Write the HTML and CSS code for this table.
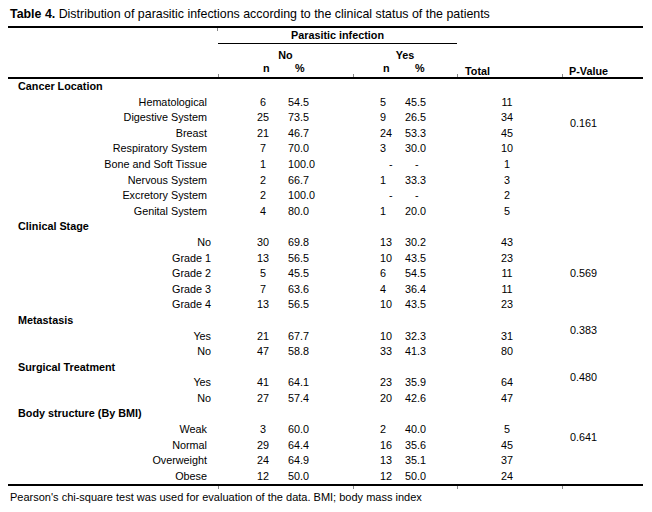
FILE: index.html
```html
<!DOCTYPE html>
<html>
<head>
<meta charset="utf-8">
<link rel="stylesheet" href="styles.css">
</head>
<body>
<div class="page">
  <div class="title"><b>Table 4.</b> Distribution of parasitic infections according to the clinical status of the patients</div>
  <div class="rule"></div>
  <div class="head">
    <div class="h-empty"></div>
    <div class="h-par">Parasitic infection</div>
    <div class="h-no">No</div>
    <div class="h-yes">Yes</div>
    <div class="h-nn tk">n</div>
    <div class="h-np">%</div>
    <div class="h-yn tk">n</div>
    <div class="h-yp">%</div>
    <div class="h-tot tk">Total</div>
    <div class="h-pv tk">P-Value</div>
  </div>
  <div class="rule"></div>
  <div class="body">
    <div class="pv pv1">0.161</div>
    <div class="pv pv2">0.569</div>
    <div class="pv pv3">0.383</div>
    <div class="pv pv4">0.480</div>
    <div class="pv pv5">0.641</div>

    <div class="grp">Cancer Location</div>
    <div class="lab">Hematological</div><div class="nn">6</div><div class="np">54.5</div><div class="yn">5</div><div class="yp">45.5</div><div class="tot">11</div>
    <div class="lab">Digestive System</div><div class="nn">25</div><div class="np">73.5</div><div class="yn">9</div><div class="yp">26.5</div><div class="tot">34</div>
    <div class="lab">Breast</div><div class="nn">21</div><div class="np">46.7</div><div class="yn">24</div><div class="yp">53.3</div><div class="tot">45</div>
    <div class="lab">Respiratory System</div><div class="nn">7</div><div class="np">70.0</div><div class="yn">3</div><div class="yp">30.0</div><div class="tot">10</div>
    <div class="lab">Bone and Soft Tissue</div><div class="nn">1</div><div class="np">100.0</div><div class="yn dash">-</div><div class="yp dash">-</div><div class="tot">1</div>
    <div class="lab">Nervous System</div><div class="nn">2</div><div class="np">66.7</div><div class="yn">1</div><div class="yp">33.3</div><div class="tot">3</div>
    <div class="lab">Excretory System</div><div class="nn">2</div><div class="np">100.0</div><div class="yn dash">-</div><div class="yp dash">-</div><div class="tot">2</div>
    <div class="lab">Genital System</div><div class="nn">4</div><div class="np">80.0</div><div class="yn">1</div><div class="yp">20.0</div><div class="tot">5</div>

    <div class="grp">Clinical Stage</div>
    <div class="lab lab-w">No</div><div class="nn">30</div><div class="np">69.8</div><div class="yn">13</div><div class="yp">30.2</div><div class="tot">43</div>
    <div class="lab lab-w">Grade 1</div><div class="nn">13</div><div class="np">56.5</div><div class="yn">10</div><div class="yp">43.5</div><div class="tot">23</div>
    <div class="lab lab-w">Grade 2</div><div class="nn">5</div><div class="np">45.5</div><div class="yn">6</div><div class="yp">54.5</div><div class="tot">11</div>
    <div class="lab lab-w">Grade 3</div><div class="nn">7</div><div class="np">63.6</div><div class="yn">4</div><div class="yp">36.4</div><div class="tot">11</div>
    <div class="lab lab-w">Grade 4</div><div class="nn">13</div><div class="np">56.5</div><div class="yn">10</div><div class="yp">43.5</div><div class="tot">23</div>

    <div class="grp">Metastasis</div>
    <div class="lab lab-w">Yes</div><div class="nn">21</div><div class="np">67.7</div><div class="yn">10</div><div class="yp">32.3</div><div class="tot">31</div>
    <div class="lab lab-w">No</div><div class="nn">47</div><div class="np">58.8</div><div class="yn">33</div><div class="yp">41.3</div><div class="tot">80</div>

    <div class="grp">Surgical Treatment</div>
    <div class="lab lab-w">Yes</div><div class="nn">41</div><div class="np">64.1</div><div class="yn">23</div><div class="yp">35.9</div><div class="tot">64</div>
    <div class="lab lab-w">No</div><div class="nn">27</div><div class="np">57.4</div><div class="yn">20</div><div class="yp">42.6</div><div class="tot">47</div>

    <div class="grp">Body structure (By BMI)</div>
    <div class="lab">Weak</div><div class="nn">3</div><div class="np">60.0</div><div class="yn">2</div><div class="yp">40.0</div><div class="tot">5</div>
    <div class="lab">Normal</div><div class="nn">29</div><div class="np">64.4</div><div class="yn">16</div><div class="yp">35.6</div><div class="tot">45</div>
    <div class="lab">Overweight</div><div class="nn">24</div><div class="np">64.9</div><div class="yn">13</div><div class="yp">35.1</div><div class="tot">37</div>
    <div class="lab">Obese</div><div class="nn">12</div><div class="np">50.0</div><div class="yn">12</div><div class="yp">50.0</div><div class="tot">24</div>
  </div>
  <div class="rule"></div>
  <div class="ticks"><span class="t2"></span><span class="t4"></span><span class="t6"></span><span class="t7"></span></div>
  <div class="foot">Pearson's chi-square test was used for evaluation of the data. BMI; body mass index</div>
</div>
</body>
</html>
```
FILE: styles.css
```css
html, body {
  margin: 0;
  padding: 0;
  background: #fff;
}
body {
  font-family: "Liberation Sans", Arial, sans-serif;
  font-size: 10.8px;
  color: #000;
}
.page {
  width: 635px;
  margin-left: 8px;
}
.title {
  font-size: 12.4px;
  line-height: 16px;
  padding: 6px 0 0 2px;
  margin-bottom: 4px;
  white-space: nowrap;
}
.rule {
  height: 2px;
  background: #000;
}
.head, .body, .ticks {
  display: grid;
  grid-template-columns: 210px 70px 65px 52px 52px 105px 81px;
}
.head {
  grid-template-rows: 16px 17px 16px;
  font-weight: bold;
  line-height: 15px;
}
.h-empty {
  grid-column: 1;
  grid-row: 1;
  background: linear-gradient(#888, #888) right top / 1px 3px no-repeat;
}
.h-par {
  grid-column: 2 / 6;
  grid-row: 1;
  text-align: center;
  border-bottom: 1px solid #000;
}
.h-no, .h-yes {
  grid-row: 2;
  text-align: center;
  padding-top: 4px;
}
.h-no { grid-column: 2 / 4; }
.h-yes { grid-column: 4 / 6; }
.h-nn, .h-np, .h-yn, .h-yp, .h-tot, .h-pv { grid-row: 3; }
.h-nn { grid-column: 2; padding-left: 45px; }
.h-np { grid-column: 3; padding-left: 7px; }
.h-yn { grid-column: 4; padding-left: 30px; }
.h-yp { grid-column: 5; padding-left: 10px; }
.h-tot { grid-column: 6; padding-left: 8px; padding-top: 2px; line-height: 16px; }
.h-pv { grid-column: 7; padding-left: 7px; padding-top: 2px; line-height: 16px; }
.tk {
  background: linear-gradient(#888, #888) left bottom / 1px 3px no-repeat;
}
.body {
  grid-auto-rows: 15.6px;
  line-height: 15.6px;
  white-space: nowrap;
}
.grp {
  grid-column: 1 / 7;
  font-weight: bold;
  padding-left: 10px;
}
.lab {
  grid-column: 1;
  text-align: right;
  padding-right: 11px;
}
.lab-w { padding-right: 7px; }
.nn { grid-column: 2; text-align: center; padding-left: 20px; }
.np { grid-column: 3; text-align: right; padding-right: 46px; }
.yn { grid-column: 4; padding-left: 27px; }
.yp { grid-column: 5; }
.yn.dash { padding-left: 36px; }
.yp.dash { padding-left: 10px; }
.tot { grid-column: 6; text-align: center; padding-right: 5px; }
.pv {
  grid-column: 7;
  padding-left: 8px;
  align-self: center;
}
.pv1 { grid-row: 3 / 5; padding-bottom: 4px; }
.pv2 { grid-row: 13; }
.pv3 { grid-row: 16 / 18; padding-top: 4px; }
.pv4 { grid-row: 19 / 21; padding-top: 5px; }
.pv5 { grid-row: 23 / 25; }
.ticks { height: 3px; }
.ticks span { border-left: 1px solid #888; }
.t2 { grid-column: 2; }
.t4 { grid-column: 4; }
.t6 { grid-column: 6; }
.t7 { grid-column: 7; }
.foot {
  font-size: 11px;
  padding: 1px 0 0 2px;
  line-height: 14px;
  white-space: nowrap;
}
```
